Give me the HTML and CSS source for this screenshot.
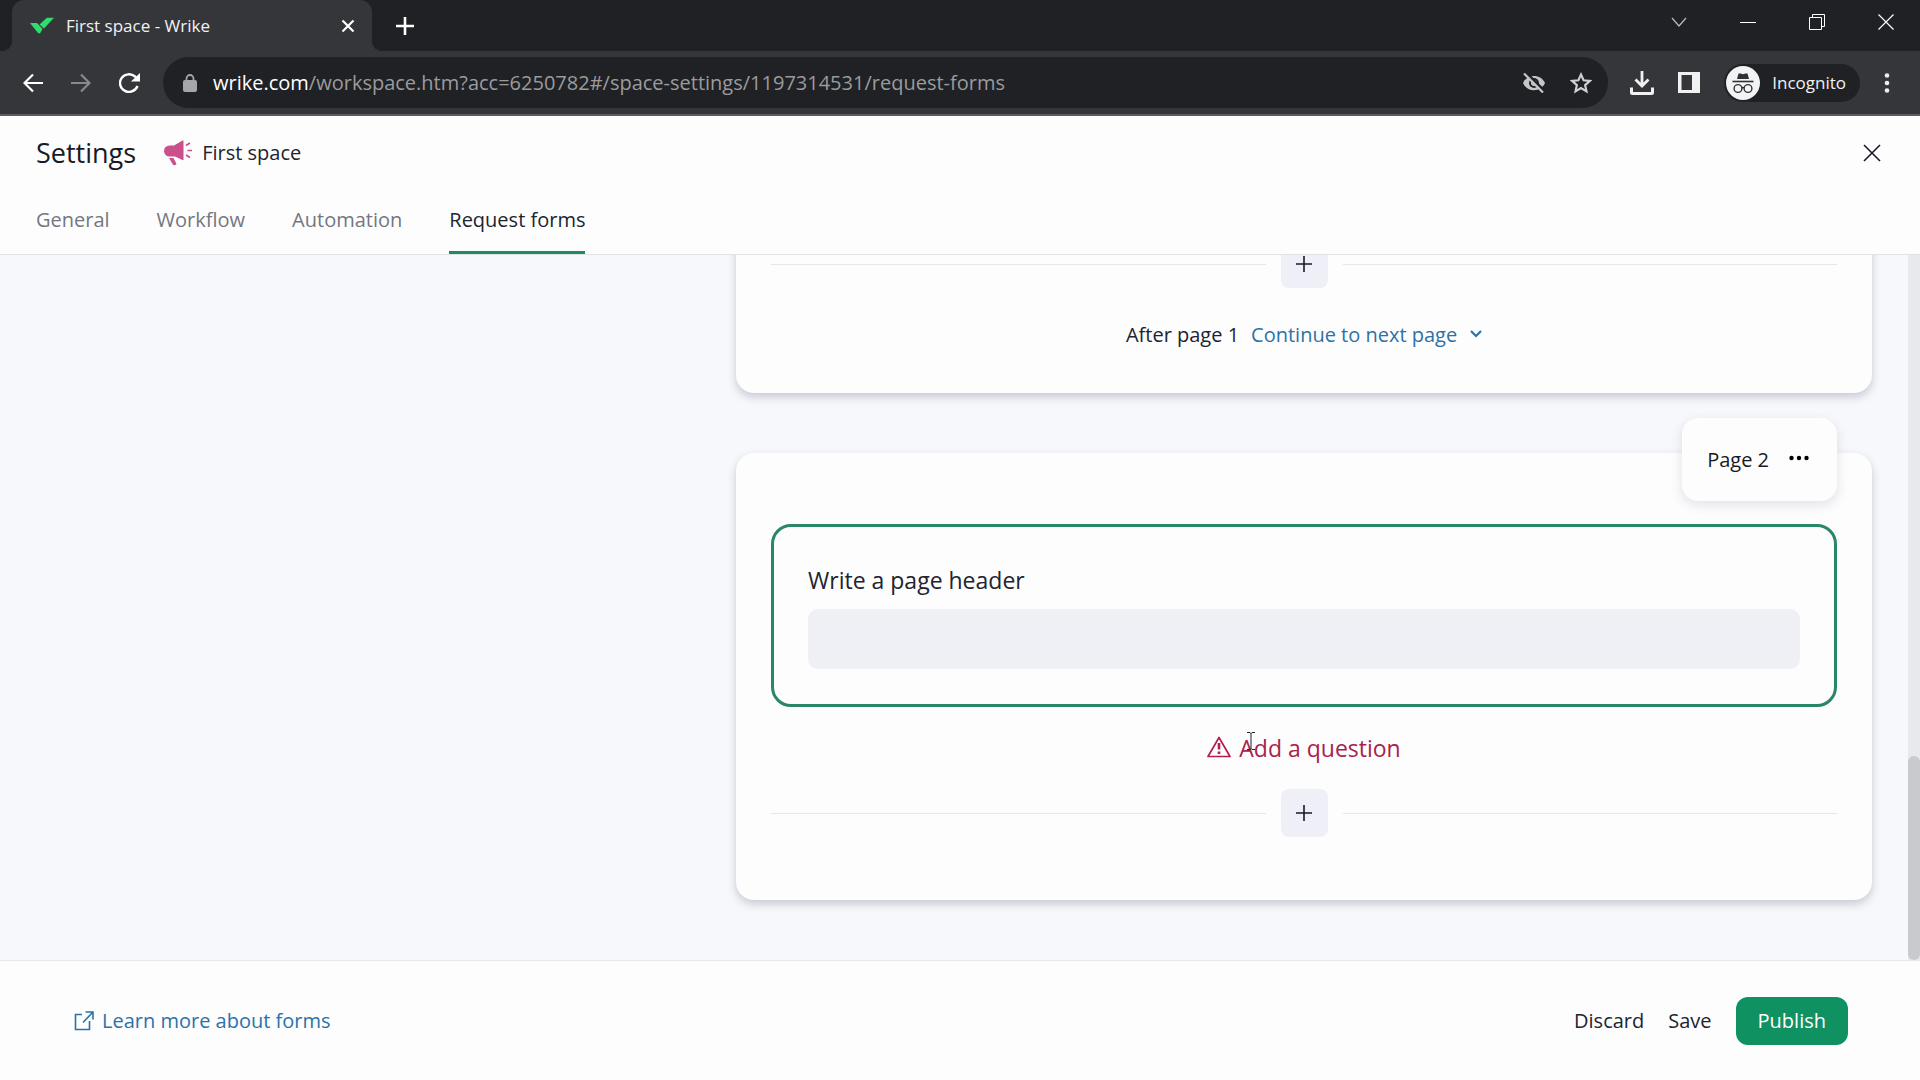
FILE: index.html
```html
<!DOCTYPE html>
<html lang="en">

<head>
    <meta charset="utf-8">
    <title>First space - Wrike</title>
    <link rel="stylesheet" href="styles.css">
</head>

<body>
    <!-- Browser window -->
    <div class="tab-strip">
        <div class="browser-tab">
            <svg class="favicon" viewBox="0 0 24 18" width="24" height="18"><path fill="#2fdc6c" d="M0 6h6c1 0 1.500.3 2 1l4.500 5L10 16.500 8 16zM9.500 7.500L16 1.500C16.600 1 17 .8 18 .8h6L14 11.500z"/></svg>
            <span class="tab-title">First space - Wrike</span>
            <button class="icon-button" aria-label="Close tab">
                <svg viewBox="0 0 14 14" width="14" height="14"><path d="M1.500 1.500l11 11M12.500 1.500l-11 11" stroke="#fff" stroke-width="2.200"/></svg>
            </button>
        </div>
        <button class="icon-button new-tab" aria-label="New tab">
            <svg viewBox="0 0 18 18" width="18" height="18"><path d="M9 0v18M0 9h18" stroke="#fff" stroke-width="2.600"/></svg>
        </button>
        <div class="window-buttons">
            <button class="icon-button" aria-label="Search tabs">
                <svg viewBox="0 0 16 16" width="16" height="16"><path d="M1 4l7 8 7-8" fill="none" stroke="#bbb" stroke-width="1.200"/></svg>
            </button>
            <button class="icon-button" aria-label="Minimize">
                <svg viewBox="0 0 16 16" width="16" height="16"><path d="M0 8.500h16" stroke="#fff"/></svg>
            </button>
            <button class="icon-button" aria-label="Restore">
                <svg viewBox="0 0 16 16" width="16" height="16"><path d="M.5 3.500h12v12h-12zM3.500 3.500v-3h12v12h-3" fill="none" stroke="#fff"/></svg>
            </button>
            <button class="icon-button" aria-label="Close window">
                <svg viewBox="0 0 16 16" width="16" height="16"><path d="M.5.5l15 15M15.500.5l-15 15" stroke="#fff" stroke-width="1.200"/></svg>
            </button>
        </div>
    </div>

    <div class="toolbar">
        <div class="nav-buttons">
            <button class="icon-button" aria-label="Back">
                <svg viewBox="0 0 20 20" width="20" height="20"><path d="M20 10H1.500M10 1.500L1.500 10l8.500 8.500" fill="none" stroke="#fff" stroke-width="2.200"/></svg>
            </button>
            <button class="icon-button" aria-label="Forward">
                <svg viewBox="0 0 20 20" width="20" height="20"><path d="M0 10h18.500M10 1.500l8.500 8.500-8.500 8.500" fill="none" stroke="#88898b" stroke-width="2.200"/></svg>
            </button>
            <button class="icon-button" aria-label="Reload">
                <svg viewBox="0 0 22 20" width="22" height="20"><path d="M18.500 13A9 8.800 0 1 1 16 3.500l2 2" fill="none" stroke="#fff" stroke-width="2.400"/><path d="M21 0v8.500h-9z" fill="#fff"/></svg>
            </button>
        </div>
        <div class="address-bar">
            <svg viewBox="0 0 14 18" width="14" height="18"><rect x="0" y="6" width="14" height="12" rx="2" fill="#a5a6a9"/><path d="M3.500 7V4.500a3.500 3.500 0 0 1 7 0V7" fill="none" stroke="#a5a6a9" stroke-width="1.800"/></svg>
            <span class="url"><span class="host">wrike.com</span>/workspace.htm?acc=6250782#/space-settings/1197314531/request-forms</span>
            <button class="icon-button" aria-label="Third-party cookies blocked">
                <svg viewBox="0 0 24 20" width="24" height="20"><path d="M1 10C5 .5 19 .5 23 10 19 19.500 5 19.500 1 10z" fill="#c5c6c8"/><circle cx="12" cy="10" r="5" fill="#202124"/><circle cx="12" cy="10" r="3" fill="#c5c6c8"/><path d="M4.500 0l18 18" stroke="#202124" stroke-width="2.600"/><path d="M2 .5l19 19" stroke="#c5c6c8" stroke-width="2.200"/></svg>
            </button>
            <button class="icon-button" aria-label="Bookmark this tab">
                <svg viewBox="0 0 22 22" width="22" height="22"><path d="M11 2.500l2.600 5.800 6.300.6-4.800 4.200 1.400 6.200-5.500-3.300-5.500 3.300 1.400-6.200L2.100 8.900l6.300-.6z" fill="none" stroke="#d0d1d3" stroke-width="2.100"/></svg>
            </button>
        </div>
        <div class="toolbar-actions">
            <button class="icon-button" aria-label="Downloads">
                <svg viewBox="0 0 24 24" width="24" height="24"><path d="M12 0v14M5.500 8.500L12 15l6.500-6.500" fill="none" stroke="#f1f1f2" stroke-width="2.800"/><path d="M1.500 16.500v5q0 1 1 1h19q1 0 1-1v-5" fill="none" stroke="#f1f1f2" stroke-width="3"/></svg>
            </button>
            <button class="icon-button" aria-label="Side panel">
                <svg viewBox="0 0 22 21" width="22" height="21"><path fill="#f1f1f2" fill-rule="evenodd" d="M0 0h22v21H0zM3.500 3v15H14V3z"/></svg>
            </button>
            <button class="profile">
                <svg viewBox="0 0 34 34" width="34" height="34"><circle cx="17" cy="17" r="17" fill="#f1f3f4"/><path d="M12.500 7.500h2l2.500.8 2.500-.8h2L23 13H11z" fill="#303134"/><path d="M6.500 15.500h21" stroke="#303134" stroke-width="1.600"/><circle cx="12" cy="22.500" r="3.900" fill="none" stroke="#303134" stroke-width="1.400"/><circle cx="22" cy="22.500" r="3.900" fill="none" stroke="#303134" stroke-width="1.400"/><path d="M15.500 22q1.500-1 3 0" fill="none" stroke="#303134" stroke-width="1.400"/></svg>
                Incognito
            </button>
            <button class="icon-button" aria-label="Menu">
                <svg viewBox="0 0 6 20" width="6" height="20"><circle cx="3" cy="2.500" r="2.300" fill="#eee"/><circle cx="3" cy="10" r="2.300" fill="#eee"/><circle cx="3" cy="17.500" r="2.300" fill="#eee"/></svg>
            </button>
        </div>
    </div>

    <!-- Space settings -->
    <header class="settings-header">
        <div class="title-row">
            <h1>Settings</h1>
            <svg viewBox="0 0 28 26" width="28" height="26"><path d="M19.500 1v18.500q0 1-1 .6L11 16.500H5.500a5.500 5.500 0 0 1 0-11H10L18.500.4q1-.4 1 .6z" fill="#c9508b"/><path d="M5 18h4.500l2.800 5.500q.4 1-.6 1.300l-1.400.4q-1 .2-1.400-.7z" fill="#c9508b"/><path d="M22 5.500l4-2.500M23.500 10.500H28M22 15l4 2.500" stroke="#c9508b" stroke-width="1.700"/></svg>
            <span class="space-name">First space</span>
            <button class="icon-button close-settings" aria-label="Close settings">
                <svg viewBox="0 0 18 18" width="18" height="18"><path d="M1 1l16 16M17 1L1 17" stroke="#161b26" stroke-width="1.600"/></svg>
            </button>
        </div>
        <nav class="tabs">
            <a href="#general">General</a>
            <a href="#workflow">Workflow</a>
            <a href="#automation">Automation</a>
            <a href="#request-forms" class="active">Request forms</a>
        </nav>
    </header>

    <main class="workspace">
        <div class="form-builder">
            <div class="pages">
                <section class="card card-first">
                    <div class="add-row">
                        <button class="add-button" aria-label="Add question to page 1">
                            <svg viewBox="0 0 18 18" width="18" height="18"><path d="M9 1v16M1 9h16" stroke="#161b26" stroke-width="1.600"/></svg>
                        </button>
                    </div>
                    <div class="after-page">
                        <label for="after-page-1">After page 1</label>
                        <select id="after-page-1">
                            <option>Continue to next page</option>
                            <option>Submit form</option>
                        </select>
                        <svg viewBox="0 0 12 12" width="12" height="12"><path d="M1 2l5 5 5-5" fill="none" stroke="#2b72a8" stroke-width="2.200"/></svg>
                    </div>
                </section>

                <section class="card">
                    <div class="page-badge">
                        <span>Page 2</span>
                        <button class="icon-button" aria-label="Page 2 options">
                            <svg viewBox="0 0 20 10" width="20" height="10"><circle cx="2.500" cy="3" r="2.200"/><circle cx="10" cy="3" r="2.200"/><circle cx="17.500" cy="3" r="2.200"/></svg>
                        </button>
                    </div>
                    <div class="page-header">
                        <label for="page-header">Write a page header</label>
                        <input type="text" id="page-header">
                    </div>
                    <p class="warning">
                        <svg viewBox="0 0 24 24" width="24" height="24"><path d="M12 1.500L23 20.500H1z" fill="none" stroke="#b3204d" stroke-width="1.700" stroke-linejoin="round"/><path d="M12 7v6.500M12 15.500v2.600" stroke="#b3204d" stroke-width="2.600"/></svg>
                        <span class="warning-text">Add a question
                            <svg class="text-cursor" viewBox="0 0 8 18" width="8" height="18"><path d="M0 .5h3l1 1 1-1h3M4 1v16M0 17.500h3l1-1 1 1h3" fill="none" stroke="#222"/></svg>
                        </span>
                    </p>
                    <div class="add-row">
                        <button class="add-button" aria-label="Add question to page 2">
                            <svg viewBox="0 0 18 18" width="18" height="18"><path d="M9 1v16M1 9h16" stroke="#161b26" stroke-width="1.600"/></svg>
                        </button>
                    </div>
                </section>
            </div>
        </div>
        <div class="scrollbar">
            <div class="scroll-thumb"></div>
        </div>
    </main>

    <footer class="footer">
        <a href="#learn-more" class="learn-more">
            <svg viewBox="0 0 20 20" width="20" height="20"><path d="M8 3.500H1.500v15h14V10M11.500 1H19v7.500M19 1L9 11.500" fill="none" stroke="#2b72a8" stroke-width="1.600"/></svg>
            Learn more about forms
        </a>
        <button class="text-button">Discard</button>
        <button class="text-button">Save</button>
        <button class="publish">Publish</button>
    </footer>
</body>

</html>
```
FILE: styles.css
```css
* {
    box-sizing: border-box;
}

body {
    display: flex;
    flex-direction: column;
    height: 100vh;
    margin: 0;
    overflow: hidden;
    background-color: #fdfdfe;
    color: #20242f;
    font-family: "Open Sans", "Noto Sans", sans-serif;
    font-size: 20px;
    line-height: 28px;
}

button, input, select {
    font: inherit;
    color: inherit;
}

button {
    border: none;
    background: none;
    padding: 0;
    cursor: pointer;
}

a {
    text-decoration: none;
}

svg {
    flex: none;
    display: block;
}

.icon-button {
    display: flex;
    align-items: center;
}

/* Browser window */
.tab-strip {
    display: flex;
    flex: none;
    height: 51px;
    padding: 0 26px 0 12px;
    background-color: #202124;
}

.browser-tab {
    position: relative;
    display: flex;
    align-items: center;
    width: 360px;
    padding: 0 17px 0 18px;
    border-radius: 12px 12px 0 0;
    background-color: #35363a;
    color: #f1f1f2;
    font-size: 17px;
}

/* curved feet of the active tab */
.browser-tab::before,
.browser-tab::after {
    content: "";
    position: absolute;
    bottom: 0;
    width: 10px;
    height: 10px;
}

.browser-tab::before {
    right: 100%;
    background: radial-gradient(circle at 0 0, #202124 10px, #35363a 10px);
}

.browser-tab::after {
    left: 100%;
    background: radial-gradient(circle at 100% 0, #202124 10px, #35363a 10px);
}

.tab-title {
    flex: 1;
    margin-left: 12px;
}

.new-tab {
    margin-left: 24px;
}

.window-buttons {
    display: flex;
    gap: 53px;
    height: 43px;
    margin-left: auto;
}

.toolbar {
    display: flex;
    flex: none;
    align-items: center;
    height: 65px;
    padding: 0 30px 0 23px;
    border-bottom: 2px solid #5b5c60;
    background-color: #35363a;
    gap: 22px;
}

.nav-buttons {
    display: flex;
    gap: 28px;
}

.toolbar-actions {
    display: flex;
    align-items: center;
    gap: 24px;
}

.address-bar {
    display: flex;
    flex: 1;
    align-items: center;
    height: 51px;
    padding: 0 16px 0 20px;
    border-radius: 26px;
    background-color: #202124;
    gap: 24px;
}

.url {
    flex: 1;
    margin-left: -8px;
    color: #9a9b9e;
}

.host {
    color: #fff;
}

.profile {
    display: flex;
    align-items: center;
    height: 38px;
    padding: 0 14px 0 2px;
    border-radius: 20px;
    background-color: #202124;
    color: #f1f1f2;
    font-size: 17px;
    gap: 12px;
}

/* Settings header */
.settings-header {
    flex: none;
    padding: 0 39px 0 36px;
    border-bottom: 1px solid #e1e2e5;
}

.title-row {
    display: flex;
    align-items: center;
    height: 74px;
}

h1 {
    margin: 0 28px 0 0;
    color: #161b26;
    font-size: 27px;
    font-weight: 500;
}

.space-name {
    margin-left: 10px;
}

.close-settings {
    margin-left: auto;
}

.tabs {
    display: flex;
    gap: 47px;
}

.tabs a {
    height: 64px;
    padding-top: 16px;
    border-bottom: 3px solid transparent;
    color: #74777f;
}

.tabs .active {
    border-color: #1f8a63;
    color: #20242f;
}

/* Form builder */
.workspace {
    display: flex;
    flex: 1;
    min-height: 0;
    background-color: #f7f8fb;
}

.form-builder {
    display: grid;
    flex: 1;
    grid-template-columns: 700fr 1136fr;
    min-height: 0;
    padding: 0 36px;
    overflow: hidden;
}

.pages {
    display: flex;
    grid-column: 2;
    flex-direction: column;
    justify-content: flex-end;
    min-height: 0;
    padding-bottom: 60px;
    gap: 60px;
}

.card {
    position: relative;
    flex: none;
    padding: 71px 35px 63px;
    border-radius: 18px;
    background-color: #fdfdfe;
    box-shadow: 0 4px 8px rgba(60, 60, 100, 0.25);
}

.card-first {
    padding-bottom: 44px;
}

.page-badge {
    position: absolute;
    top: -35px;
    right: 35px;
    display: flex;
    align-items: center;
    height: 83px;
    padding: 0 28px 0 25px;
    border-radius: 16px;
    background-color: #fdfdfe;
    box-shadow: 0 4px 12px rgba(60, 60, 100, 0.14);
    color: #161b26;
    font-weight: 500;
    gap: 20px;
}

.page-header {
    padding: 37px 34px 35px;
    border: 3px solid #2a8765;
    border-radius: 20px;
}

.page-header label {
    display: block;
    margin-bottom: 13px;
    font-size: 23px;
    line-height: 32px;
}

.page-header input {
    display: block;
    width: 100%;
    height: 60px;
    padding: 0 16px;
    border: none;
    border-radius: 10px;
    background-color: #eef0f6;
}

.warning {
    display: flex;
    align-items: center;
    justify-content: center;
    height: 82px;
    margin: 0;
    color: #a8234c;
    font-size: 23px;
    gap: 8px;
}

.warning-text {
    position: relative;
}

.text-cursor {
    position: absolute;
    top: -2px;
    left: 8px;
}

.add-row {
    display: flex;
    align-items: center;
    gap: 15px;
}

.add-row::before,
.add-row::after {
    content: "";
    flex: 1;
    height: 1px;
    background-color: #e6e7ea;
}

.add-button {
    display: flex;
    align-items: center;
    justify-content: center;
    width: 47px;
    height: 48px;
    border-radius: 8px;
    background-color: #eeeff7;
}

.after-page {
    display: flex;
    align-items: center;
    justify-content: center;
    margin-top: 33px;
}

.after-page select {
    margin: 0 12px;
    padding: 0;
    border: none;
    appearance: none;
    background: none;
    color: #2b72a8;
}

/* Scrollbar of the form builder */
.scrollbar {
    display: flex;
    align-items: flex-end;
    width: 12px;
    background-color: #e8e9ed;
}

.scroll-thumb {
    width: 100%;
    height: 29%;
    border-radius: 6px;
    background-color: #c8cacf;
}

/* Footer */
.footer {
    display: flex;
    flex: none;
    align-items: center;
    height: 120px;
    padding: 0 72px 0 74px;
    border-top: 1px solid #e6e7ea;
    gap: 24px;
}

.learn-more {
    display: flex;
    align-items: center;
    margin-right: auto;
    color: #2b72a8;
    gap: 8px;
}

.publish {
    height: 48px;
    padding: 0 22px;
    border-radius: 12px;
    background-color: #0f9162;
    color: #fff;
}
```
